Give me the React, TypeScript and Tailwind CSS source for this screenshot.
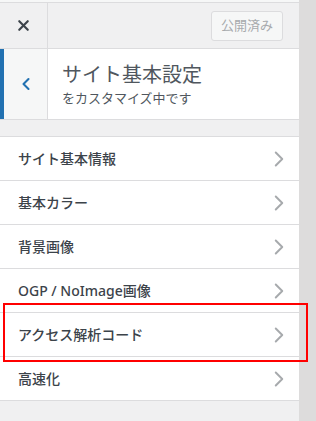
import { ChevronLeft, ChevronRight, X } from "lucide-react"

const items = [
    "サイト基本情報",
    "基本カラー",
    "背景画像",
    "OGP / NoImage画像",
    "アクセス解析コード",
    "高速化",
]

export default function App() {
    return (
        <div
            className="relative flex h-[421px] w-[316px] overflow-hidden bg-[#f0f0f1] text-[#3c434a]"
            style={{ fontFamily: '"Noto Sans", "Noto Sans CJK JP", sans-serif' }}
        >
            <div className="flex w-[299px] flex-col">
                <div className="h-[2px] bg-[#f6f7f7]" />
                <div className="flex h-[47px] border-y border-[#dcdcde] bg-[#f0f0f1]">
                    <div className="flex w-[48px] items-center justify-center border-r border-[#dcdcde]">
                        <X size={17} strokeWidth={3} className="text-[#3c434a]" />
                    </div>
                    <div className="flex flex-1 items-center justify-end pr-[16px]">
                        <div className="flex h-[30px] w-[72px] items-center justify-center rounded-[3px] border border-[#dcdcde] bg-[#f6f7f7] text-[13px] text-[#a7aaad]">
                            公開済み
                        </div>
                    </div>
                </div>
                <div className="flex h-[71px] border-b border-[#dcdcde] bg-white">
                    <div className="w-[4px] bg-[#2271b1]" />
                    <div className="flex w-[44px] items-center justify-center border-r border-[#dcdcde] bg-[#f6f7f7]">
                        <ChevronLeft size={20} strokeWidth={2.5} className="text-[#2271b1]" />
                    </div>
                    <div className="flex flex-col justify-center pl-[14px]">
                        <div className="text-[20px] leading-[26px] text-[#50575e]">サイト基本設定</div>
                        <div className="mt-[1px] text-[13px] leading-[18px] text-[#50575e]">をカスタマイズ中です</div>
                    </div>
                </div>
                <div className="mt-[16px] border-t border-[#dcdcde]">
                    {items.map((item) => (
                        <div
                            key={item}
                            className="flex h-[44px] items-center justify-between border-b border-[#dcdcde] bg-white pl-[18px] pr-[7px]"
                        >
                            <span className="text-[14px] font-medium text-[#3c434a]">{item}</span>
                            <ChevronRight size={26} strokeWidth={1.8} className="text-[#a7aaad]" />
                        </div>
                    ))}
                </div>
            </div>
            <div className="flex-1 bg-[#dddcdc]" />
            <div className="absolute left-[3px] top-[303px] h-[59px] w-[305px] border-2 border-[#ff0000]" />
        </div>
    )
}
